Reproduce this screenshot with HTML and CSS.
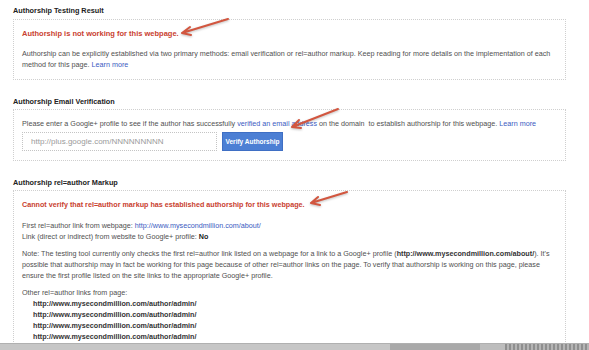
FILE: index.html
```html
<!DOCTYPE html>
<html lang="en">
<head>
    <meta charset="UTF-8">
    <title>Authorship Testing Result</title>
    <link rel="stylesheet" href="styles.css">
</head>
<body>
    <div class="page">
        <div class="section">
            <h2>Authorship Testing Result</h2>
            <div class="box">
                <p class="error">Authorship is not working for this webpage.</p>
                <p>Authorship can be explicitly established via two primary methods: email verification or rel=author markup. Keep reading for more details on the implementation of each method for this page. <a href="#">Learn more</a></p>
            </div>
        </div>

        <div class="section">
            <h2>Authorship Email Verification</h2>
            <div class="box">
                <p>Please enter a Google+ profile to see if the author has successfully <a href="#">verified an email address</a> on the domain &nbsp;to establish authorship for this webpage. <a href="#">Learn more</a></p>
                <div class="verify-row">
                    <input class="profile-input" type="text" placeholder="http://plus.google.com/NNNNNNNNN">
                    <button class="btn">Verify Authorship</button>
                </div>
            </div>
        </div>

        <div class="section">
            <h2>Authorship rel=author Markup</h2>
            <div class="box">
                <p class="error error-markup">Cannot verify that rel=author markup has established authorship for this webpage.</p>
                <p class="info">First rel=author link from webpage: <a href="#">http://www.mysecondmillion.com/about/</a><br>
                Link (direct or indirect) from website to Google+ profile: <b>No</b></p>
                <p class="note">Note: The testing tool currently only checks the first rel=author link listed on a webpage for a link to a Google+ profile (<b>http://www.mysecondmillion.com/about/</b>). It's possible that authorship may in fact be working for this page because of other rel=author links on the page. To verify that authorship is working on this page, please ensure the first profile listed on the site links to the appropriate Google+ profile.</p>
                <p class="other">Other rel=author links from page:</p>
                <ul class="link-list">
                    <li>http://www.mysecondmillion.com/author/admin/</li>
                    <li>http://www.mysecondmillion.com/author/admin/</li>
                    <li>http://www.mysecondmillion.com/author/admin/</li>
                    <li>http://www.mysecondmillion.com/author/admin/</li>
                    <li>http://www.mysecondmillion.com/author/admin/</li>
                    <li>http://www.mysecondmillion.com/author/admin/</li>
                </ul>
            </div>
        </div>
    </div>

    <!-- annotation arrows drawn over the page -->
    <svg class="arrows" width="589" height="350" viewBox="0 0 589 350">
        <g fill="none" stroke="#d2563f" stroke-width="2" stroke-linecap="round" stroke-linejoin="round">
            <path d="M228 19 L182 33 M182 33 L190 27 M182 33 L191 35"></path>
            <path d="M338 109 L292 127 M292 127 L299 120 M292 127 L301 128"></path>
            <path d="M347 192 L311 203 M311 203 L318 197 M311 203 L320 205"></path>
        </g>
    </svg>

    <div class="taskbar">
        <span class="seg-light"></span>
        <span class="seg-dark"></span>
        <span class="seg-mid"></span>
        <span class="seg-end"></span>
    </div>
</body>
</html>
```

FILE: styles.css
```css
:root {
    --text: #505050;
    --heading: #222222;
    --error: #c9412f;
    --link: #3a5bbf;
    --border: #cfcfcf;
    --btn: #4c7fd4;
}

html, body {
    margin: 0;
    padding: 0;
    height: 350px;
    overflow: hidden;
    background: #ffffff;
}

body {
    font-family: 'Liberation Sans', Arial, sans-serif;
    font-size: 7.2px;
    line-height: 11px;
    color: var(--text);
}

.page {
    width: 553px;
    padding: 5px 0 0 13px;
}

.section {
    margin-bottom: 16px;
}

h2 {
    margin: 0 0 2px;
    font-size: 7.3px;
    line-height: 11px;
    font-weight: bold;
    color: var(--heading);
}

.box {
    border: 1px dotted var(--border);
    padding: 8px 8px 9px;
}

.section:first-child h2 {
    margin-bottom: 3px;
}

p {
    margin: 0;
}

a {
    color: var(--link);
    text-decoration: none;
}

.error {
    color: var(--error);
    font-size: 7.5px;
    font-weight: bold;
    margin-bottom: 9px;
}

.error-markup {
    font-size: 7.2px;
    margin-bottom: 10px;
}

.verify-row {
    display: flex;
    align-items: center;
    gap: 5px;
    margin-top: 3px;
}

.profile-input {
    width: 195px;
    height: 19px;
    box-sizing: border-box;
    border: 1px dotted #c4c4c4;
    padding: 0 8px;
    font-family: 'Liberation Sans', Arial, sans-serif;
    font-size: 8px;
    color: #999999;
    outline: none;
}

.profile-input::placeholder {
    color: #9a9a9a;
}

.btn {
    width: 61px;
    height: 19px;
    padding: 0;
    border: 1px solid #3f6fc4;
    background: var(--btn);
    color: #ffffff;
    font-family: 'Liberation Sans', Arial, sans-serif;
    font-size: 6.5px;
    font-weight: bold;
}

.info {
    margin-bottom: 6px;
}

.info b {
    color: #222222;
}

.note {
    margin-bottom: 6px;
}

.note b {
    color: #333333;
}

.link-list {
    list-style: none;
    margin: 0;
    padding: 0 0 0 11px;
    font-weight: bold;
    color: #333333;
}

.arrows {
    position: absolute;
    top: 0;
    left: 0;
    filter: drop-shadow(0 1px 1px rgba(0, 0, 0, 0.25));
}

.taskbar {
    position: fixed;
    left: 0;
    right: 0;
    bottom: 0;
    height: 6px;
    display: flex;
    background: #c6c6c6;
    border-top: 1px solid #b0b0b0;
}

.seg-light {
    width: 390px;
}

.seg-dark {
    width: 90px;
    background: #a9a9a9;
}

.seg-mid {
    width: 25px;
    background: #bdbdbd;
}

.seg-end {
    flex: 1;
    background: repeating-linear-gradient(90deg, #8f8f8f 0 2px, #b5b5b5 2px 4px);
}
```
